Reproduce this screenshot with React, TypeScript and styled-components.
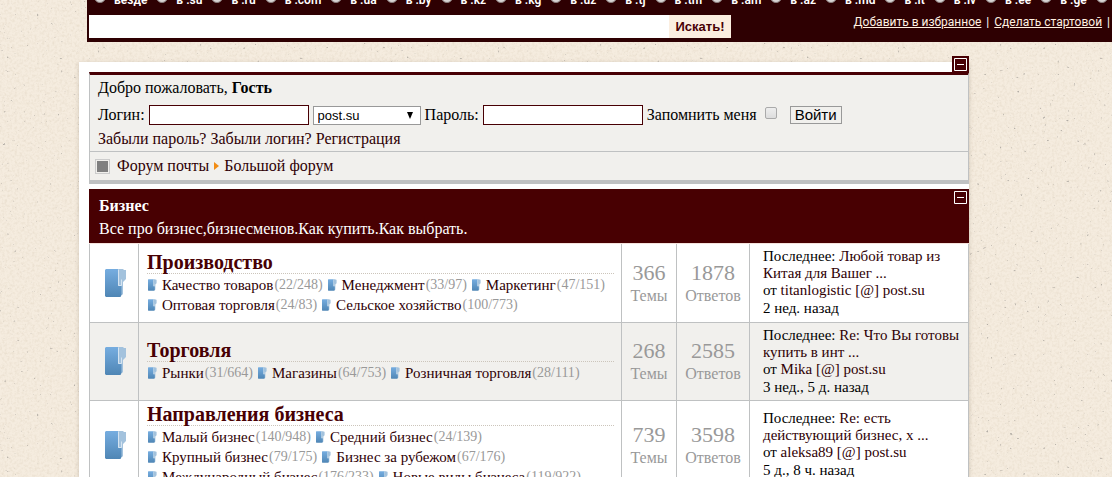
import React from "react";
import styled, { createGlobalStyle } from "styled-components";

const paper = encodeURIComponent(
  `<svg xmlns="http://www.w3.org/2000/svg" width="400" height="400">
    <filter id="g" x="0" y="0" width="100%" height="100%">
      <feTurbulence type="fractalNoise" baseFrequency="0.4" numOctaves="3" seed="4" stitchTiles="stitch"/>
      <feColorMatrix values="0 0 0 0 0.6  0 0 0 0 0.5  0 0 0 0 0.36  0.5 0 0 0 -0.2"/>
    </filter>
    <filter id="s" x="0" y="0" width="100%" height="100%">
      <feTurbulence type="fractalNoise" baseFrequency="0.3" numOctaves="2" seed="11" stitchTiles="stitch"/>
      <feColorMatrix values="0 0 0 0 0.45  0 0 0 0 0.42  0 0 0 0 0.38  7 0 0 0 -5.2"/>
    </filter>
    <rect width="400" height="400" fill="#f5ecdf"/>
    <rect width="400" height="400" filter="url(#g)"/>
    <rect width="400" height="400" filter="url(#s)"/>
  </svg>`
);

const Global = createGlobalStyle`
  html { scrollbar-width: none; }
  body {
    margin: 0;
    background: #f5ecdf url("data:image/svg+xml,${paper}");
    color: #000;
    font: 16px/18px "Liberation Serif", "Times New Roman", serif;
  }
  a { color: #2f0004; text-decoration: none; }
`;

const Header = styled.header`
  margin-left: 87px;
  padding: 0 0 4px 2px;
  background: #2e0002;
  color: #fff;
  font-family: Roboto, "Noto Sans", sans-serif;
`;

const Domains = styled.div`
  display: flex;
  align-items: flex-end;
  gap: 9px;
  height: 9px;
  padding-left: 5px;
  margin-bottom: 6px;
  overflow: hidden;
  white-space: nowrap;
`;

const Domain = styled.label`
  display: flex;
  flex: none;
  align-items: center;
  gap: 8px;
  font-size: 12px;
  font-weight: 600;
  line-height: 18px;
`;

const Radio = styled.input`
  appearance: none;
  box-sizing: border-box;
  width: 12px;
  height: 12px;
  margin: 0 0 6px;
  border: 1px solid #8c8080;
  border-radius: 50%;
  background: #d8d4d4;
`;

const SearchRow = styled.div`
  display: flex;
  align-items: center;
`;

const SearchForm = styled.form`
  display: flex;
  flex: 0 1 642px;
`;

const SearchInput = styled.input`
  flex: 1;
  min-width: 0;
  box-sizing: border-box;
  height: 23px;
  padding: 0 4px;
  border: 0;
  background: #fff;
`;

const SearchButton = styled.button`
  width: 62px;
  height: 23px;
  padding: 0;
  border: 0;
  background: #fbeee0;
  color: #480004;
  font: bold 13px "Liberation Sans", Arial, sans-serif;
`;

const HeaderLinks = styled.nav`
  margin-left: auto;
  padding: 0 0 8px;
  font-size: 12px;
  line-height: 15px;
  white-space: nowrap;

  a {
    color: #fff0e0;
    text-decoration: underline;
  }
`;

const Divider = styled.span`
  margin: 0 2px;
`;

const Panel = styled.main`
  margin: 20px 143px 0 79px;
  padding: 10px 0 10px 10px;
  background: #fff;
  box-shadow: 0 1px 4px rgba(90, 70, 50, 0.25);
`;

const TopBox = styled.section`
  position: relative;
  margin-bottom: 5px;
  border: 1px solid #bfc1c2;
  border-top: 3px solid #480004;
  border-bottom: 4px solid #bfc1c2;
  background: #f1f0ed;
`;

const Collapse = styled.button<{ $raised?: boolean }>`
  position: absolute;
  top: ${(p) => (p.$raised ? "-19px" : "0")};
  right: ${(p) => (p.$raised ? "-1px" : "0")};
  display: flex;
  width: 17px;
  height: 17px;
  padding: 2px;
  border: 0;
  background: #480004;
`;

const LoginForm = styled.form`
  padding: 4px 8px 3px;
  border-bottom: 1px solid #bfc1c2;
`;

const Line = styled.p`
  margin: 0;
`;

const Fields = styled.div`
  display: flex;
  align-items: center;
  gap: 4px;
  box-sizing: border-box;
  height: 33px;
  padding-top: 3px;
`;

const TextInput = styled.input`
  box-sizing: border-box;
  width: 160px;
  height: 20px;
  padding: 0 4px;
  border: 1px solid #480004;
  background: #fff;
`;

const SelectBox = styled.span`
  display: flex;
  align-items: center;
  width: 108px;

  svg {
    margin-left: -15px;
    pointer-events: none;
  }
`;

const Select = styled.select`
  appearance: none;
  box-sizing: border-box;
  width: 108px;
  height: 19px;
  padding: 0 4px;
  border: 1px solid #999;
  border-radius: 0;
  background: #fff;
  color: #000;
  font: 13px "Liberation Sans", Arial, sans-serif;
`;

const Check = styled.input`
  appearance: none;
  box-sizing: border-box;
  width: 12px;
  height: 12px;
  margin: 0 9px 4px 4px;
  border: 1px solid #aaa;
  border-radius: 2px;
  background: linear-gradient(#eee, #ddd);
`;

const LoginButton = styled.button`
  height: 18px;
  padding: 0 4px;
  border: 1px solid #999;
  background: #f1f0ed;
  color: #000;
  font: 15px/16px "Liberation Sans", Arial, sans-serif;
`;

const Crumbs = styled.nav`
  display: flex;
  align-items: center;
  height: 28px;
  padding-left: 5px;
`;

const Square = styled.span`
  box-sizing: border-box;
  width: 15px;
  height: 15px;
  margin-right: 7px;
  border: 1px solid #ccc;
  background: #808080;
  box-shadow: inset 0 0 0 1px #f1f0ed;
`;

const Arrow = styled.svg`
  margin: 0 5px;
`;

const CategoryHead = styled.header`
  position: relative;
  padding: 6px 10px 3px;
  border-bottom: 1px solid #f5e2dc;
  background: #480002;
  color: #fff;
`;

const CategoryTitle = styled.h2`
  margin: 0;
  font-size: 16px;
  line-height: 22px;
`;

const CategoryText = styled.p`
  margin: 0;
  line-height: 23px;
`;

const Table = styled.table`
  width: 100%;
  border-collapse: collapse;
  table-layout: fixed;
`;

const Row = styled.tr`
  border-bottom: 1px solid #bfc1c2;
  &:nth-child(even) {
    background: #f1f0ed;
  }
`;

const Cell = styled.td<{ $pad?: string; $center?: boolean }>`
  height: 78px;
  box-sizing: border-box;
  padding: ${(p) => p.$pad ?? "0"};
  border-left: 1px solid #bfc1c2;
  border-right: 1px solid #bfc1c2;
  text-align: ${(p) => (p.$center ? "center" : "left")};
  vertical-align: middle;
`;

const BigFolder = styled.svg`
  display: block;
  width: 22px;
  height: 28px;
  margin: 0 auto;
`;

const SmallFolder = styled.svg`
  width: 9px;
  height: 12px;
  margin: 0 5px 0 1px;
`;

const ForumTitle = styled.h3`
  margin: 0 0 1px;
  border-bottom: 1px dotted #ccc5bb;
  font-size: 20px;
  line-height: 22px;
  a {
    color: #480004;
  }
`;

const Subs = styled.ul`
  margin: 0;
  padding: 0;
  list-style: none;
  font-size: 15px;
`;

const SubLine = styled.li`
  display: flex;
  gap: 4px;
  line-height: 20px;
  white-space: nowrap;
`;

const Sub = styled.span`
  display: flex;
  align-items: center;
`;

const Count = styled.span`
  margin-left: 1px;
  color: #999;
  font-size: 14px;
`;

const Stat = styled.div`
  color: #999;
  line-height: 22px;
`;

const StatNumber = styled.div`
  font-size: 22px;
  line-height: 24px;
`;

const Last = styled.div`
  font-size: 15px;
  line-height: 17px;
`;

const When = styled.div`
  line-height: 18px;
`;

const MinusIcon = () => (
  <svg width="13" height="13" viewBox="0 0 13 13" aria-hidden="true">
    <path d="M.5.5h12v12H.5zM3 6.5h7" fill="none" stroke="#fff" />
  </svg>
);

const FolderShape = () => (
  <>
    <path d="M12 0h6l1 1h2v9l-3 3v12l-1 1h-5z" fill="#a3c2dd" />
    <path d="M1 0h12v17h3.500v9l-1 2H1l-1-1V1z" fill="url(#folder)" />
    <path d="M13.500 .5v16h3v-6" fill="none" stroke="#d5e4f1" />
  </>
);

type SubForum = [string, string];
type Forum = {
  title: string;
  subs: SubForum[][];
  topics: number;
  replies: number;
  post: [string, string];
  user: string;
  when: string;
};

const forums: Forum[] = [
  {
    title: "Производство",
    subs: [
      [["Качество товаров", "22/248"], ["Менеджмент", "33/97"], ["Маркетинг", "47/151"]],
      [["Оптовая торговля", "24/83"], ["Сельское хозяйство", "100/773"]],
    ],
    topics: 366,
    replies: 1878,
    post: ["Любой товар из", "Китая для Вашег ..."],
    user: "titanlogistic [@] post.su",
    when: "2 нед. назад",
  },
  {
    title: "Торговля",
    subs: [[["Рынки", "31/664"], ["Магазины", "64/753"], ["Розничная торговля", "28/111"]]],
    topics: 268,
    replies: 2585,
    post: ["Re: Что Вы готовы", "купить в инт ..."],
    user: "Mika [@] post.su",
    when: "3 нед., 5 д. назад",
  },
  {
    title: "Направления бизнеса",
    subs: [
      [["Малый бизнес", "140/948"], ["Средний бизнес", "24/139"]],
      [["Крупный бизнес", "79/175"], ["Бизнес за рубежом", "67/176"]],
      [["Международный бизнес", "176/233"], ["Новые виды бизнеса", "119/922"]],
    ],
    topics: 739,
    replies: 3598,
    post: ["Re: есть", "действующий бизнес, х ..."],
    user: "aleksa89 [@] post.su",
    when: "5 д., 8 ч. назад",
  },
];

const domains = [
  "везде", "в .su", "в .ru", "в .com", "в .ua", "в .by", "в .kz", "в .kg", "в .uz", "в .tj",
  "в .tm", "в .am", "в .az", "в .md", "в .lt", "в .lv", "в .ee", "в .ge", "в .de",
];

export default function App() {
  return (
    <>
      <Global />
      <svg width="0" height="0" style={{ display: "block" }} aria-hidden="true">
        <defs>
          <linearGradient id="folder" x1="0" y1="0" x2="0" y2="1">
            <stop offset="0" stopColor="#76ade0" />
            <stop offset="1" stopColor="#4f86b5" />
          </linearGradient>
        </defs>
      </svg>
      <Header>
        <Domains>
          {domains.map((d) => (
            <Domain key={d}>
              <Radio type="radio" name="zone" />
              {d}
            </Domain>
          ))}
        </Domains>
        <SearchRow>
          <SearchForm>
            <SearchInput type="text" aria-label="Поиск" />
            <SearchButton type="button">Искать!</SearchButton>
          </SearchForm>
          <HeaderLinks>
            <a href="#favorite">Добавить в избранное</a>
            <Divider> | </Divider>
            <a href="#home">Сделать стартовой</a>
            <Divider> |</Divider>
          </HeaderLinks>
        </SearchRow>
      </Header>
      <Panel>
        <TopBox>
          <Collapse type="button" $raised aria-label="Свернуть">
            <MinusIcon />
          </Collapse>
          <LoginForm>
            <Line>
              Добро пожаловать, <b>Гость</b>
            </Line>
            <Fields>
              <label htmlFor="login">Логин:</label>
              <TextInput id="login" type="text" />
              <SelectBox>
                <Select aria-label="Домен">
                  <option>post.su</option>
                </Select>
                <svg width="8" height="7" viewBox="0 0 8 7" aria-hidden="true">
                  <path d="M1 0h6L4 7z" />
                </svg>
              </SelectBox>
              <label htmlFor="password">Пароль:</label>
              <TextInput id="password" type="password" />
              <label htmlFor="remember">Запомнить меня</label>
              <Check id="remember" type="checkbox" />
              <LoginButton type="button">Войти</LoginButton>
            </Fields>
            <Line>
              <a href="#password">Забыли пароль?</a> <a href="#login">Забыли логин?</a>{" "}
              <a href="#register">Регистрация</a>
            </Line>
          </LoginForm>
          <Crumbs>
            <Square />
            <a href="#mail">Форум почты</a>
            <Arrow width="5" height="8" viewBox="0 0 5 8" aria-hidden="true">
              <path d="M0 0l5 4-5 4z" fill="#f28c13" />
            </Arrow>
            <a href="#forum">Большой форум</a>
          </Crumbs>
        </TopBox>
        <section>
          <CategoryHead>
            <CategoryTitle>Бизнес</CategoryTitle>
            <CategoryText>Все про бизнес,бизнесменов.Как купить.Как выбрать.</CategoryText>
            <Collapse type="button" aria-label="Свернуть">
              <MinusIcon />
            </Collapse>
          </CategoryHead>
          <Table>
            <colgroup>
              <col style={{ width: 49 }} />
              <col />
              <col style={{ width: 55 }} />
              <col style={{ width: 73 }} />
              <col style={{ width: 219 }} />
            </colgroup>
            <tbody>
              {forums.map((f) => (
                <Row key={f.title}>
                  <Cell $pad="0 0 0 4px">
                    <BigFolder viewBox="0 0 22 28" aria-hidden="true">
                      <FolderShape />
                    </BigFolder>
                  </Cell>
                  <Cell $pad="2px 7px 2px 8px">
                    <ForumTitle>
                      <a href="#topic">{f.title}</a>
                    </ForumTitle>
                    <Subs>
                      {f.subs.map((line, i) => (
                        <SubLine key={i}>
                          {line.map(([name, count]) => (
                            <Sub key={name}>
                              <SmallFolder viewBox="0 0 22 28" aria-hidden="true">
                                <FolderShape />
                              </SmallFolder>
                              <a href="#sub">{name}</a>
                              <Count>({count})</Count>
                            </Sub>
                          ))}
                        </SubLine>
                      ))}
                    </Subs>
                  </Cell>
                  <Cell $center $pad="2px 0 0">
                    <Stat>
                      <StatNumber>{f.topics}</StatNumber>
                      Темы
                    </Stat>
                  </Cell>
                  <Cell $center $pad="2px 0 0">
                    <Stat>
                      <StatNumber>{f.replies}</StatNumber>
                      Ответов
                    </Stat>
                  </Cell>
                  <Cell $pad="0 4px 0 13px">
                    <Last>
                      Последнее:{" "}
                      <a href="#post">
                        {f.post[0]}
                        <br />
                        {f.post[1]}
                      </a>
                      <br />
                      от <a href="#user">{f.user}</a>
                      <When>{f.when}</When>
                    </Last>
                  </Cell>
                </Row>
              ))}
            </tbody>
          </Table>
        </section>
      </Panel>
    </>
  );
}
